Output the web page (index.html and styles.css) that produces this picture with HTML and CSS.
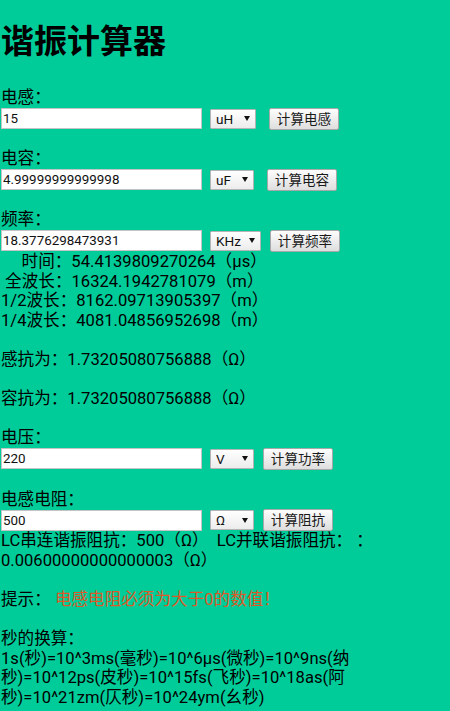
FILE: index.html
```html
<!DOCTYPE html>
<html lang="zh-CN">
<head>
<meta charset="utf-8">
<title>谐振计算器</title>
<link rel="stylesheet" href="styles.css">
</head>
<body>
<h1 class="title">谐振计算器</h1>

<div class="field">
  <div class="label">电感：</div>
  <div class="row">
    <input class="num" type="text" value="15">
    <span class="unit-wrap"><select class="unit unit-uh"><option>uH</option></select></span>
    <button class="calc calc-far">计算电感</button>
  </div>
</div>

<div class="field spaced">
  <div class="label">电容：</div>
  <div class="row">
    <input class="num" type="text" value="4.99999999999998">
    <span class="unit-wrap"><select class="unit"><option>uF</option></select></span>
    <button class="calc calc-far">计算电容</button>
  </div>
</div>

<div class="field spaced">
  <div class="label">频率：</div>
  <div class="row">
    <input class="num" type="text" value="18.3776298473931">
    <span class="unit-wrap"><select class="unit unit-khz"><option>KHz</option></select></span>
    <button class="calc">计算频率</button>
  </div>
</div>

<div class="results">
  <div class="line">&nbsp;&nbsp;&nbsp;&nbsp;&nbsp;时间：54.4139809270264（μs）</div>
  <div class="line">&nbsp;全波长：16324.1942781079（m）</div>
  <div class="line">1/2波长：8162.09713905397（m）</div>
  <div class="line">1/4波长：4081.04856952698（m）</div>
</div>

<div class="line spaced">感抗为：1.73205080756888（Ω）</div>
<div class="line spaced">容抗为：1.73205080756888（Ω）</div>

<div class="field spaced">
  <div class="label">电压：</div>
  <div class="row">
    <input class="num" type="text" value="220">
    <span class="unit-wrap"><select class="unit"><option>V</option></select></span>
    <button class="calc">计算功率</button>
  </div>
</div>

<div class="field spaced">
  <div class="label">电感电阻：</div>
  <div class="row">
    <input class="num" type="text" value="500">
    <span class="unit-wrap"><select class="unit"><option>Ω</option></select></span>
    <button class="calc">计算阻抗</button>
  </div>
</div>

<div class="line">LC串连谐振阻抗：500（Ω）&nbsp;&nbsp;LC并联谐振阻抗： ：0.00600000000000003（Ω）</div>

<div class="line spaced">提示： <span class="warn">电感电阻必须为大于0的数值！</span></div>

<div class="line spaced">秒的换算：</div>
<div class="line">1s(秒)=10^3ms(毫秒)=10^6μs(微秒)=10^9ns(纳秒)=10^12ps(皮秒)=10^15fs(飞秒)=10^18as(阿秒)=10^21zm(仄秒)=10^24ym(幺秒)</div>
</body>
</html>
```

FILE: styles.css
```css
html {
  background: #00cc99;
}

body {
  margin: 0;
  padding: 0 0 0 1px;
  background: #00cc99;
  color: #000;
  font-family: Roboto, "Noto Sans CJK SC", sans-serif;
  font-size: 16.6px;
  line-height: 19.6px;
  text-spacing-trim: space-all;
}

.title {
  margin: 19px 0 24px;
  font-size: 33px;
  line-height: 45px;
  font-weight: bold;
}

.spaced {
  margin-top: 19.6px;
}

.label,
.line {
  min-height: 19.6px;
}

.row {
  display: flex;
  align-items: center;
  height: 22px;
}

.num {
  box-sizing: border-box;
  width: 201px;
  height: 21px;
  margin: 0;
  padding: 0 0 0 1px;
  border: 1px solid #c4c4c4;
  background: #fff;
  color: #111;
  font-family: Roboto, "Noto Sans CJK SC", sans-serif;
  font-size: 13.4px;
  outline: none;
}

.unit-wrap {
  position: relative;
  display: inline-flex;
  margin-left: 8px;
}

.unit-wrap::after {
  content: "";
  position: absolute;
  right: 6px;
  top: 7.5px;
  width: 0;
  height: 0;
  border-left: 3.5px solid transparent;
  border-right: 3.5px solid transparent;
  border-top: 5.5px solid #111;
  pointer-events: none;
}

.unit {
  -webkit-appearance: none;
  appearance: none;
  box-sizing: border-box;
  width: 44px;
  height: 20px;
  margin: 0;
  padding: 0 0 0 5px;
  border: 1px solid #b4b4b4;
  border-radius: 1px;
  background: linear-gradient(#ffffff, #ececec);
  color: #111;
  font-family: Roboto, "Noto Sans CJK SC", sans-serif;
  font-size: 13.6px;
  line-height: 18px;
}

.unit-uh {
  width: 46px;
}

.unit-khz {
  width: 51px;
}

.calc {
  box-sizing: border-box;
  width: 70px;
  height: 22px;
  margin: 0 0 0 9px;
  padding: 0;
  border: 1px solid #a8a8a8;
  border-radius: 2px;
  background: linear-gradient(#fdfdfd, #dedede);
  color: #1a1a1a;
  font-family: Roboto, "Noto Sans CJK SC", sans-serif;
  font-size: 13.6px;
  line-height: 20px;
}

.calc-far {
  margin-left: 13px;
}

.warn {
  color: #dc5a28;
}
```
